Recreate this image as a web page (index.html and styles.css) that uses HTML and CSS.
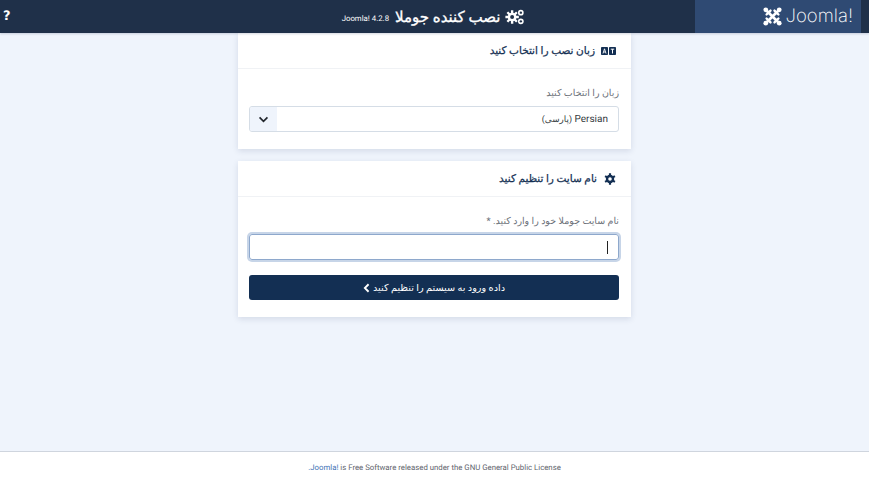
FILE: index.html
```html
<!DOCTYPE html>
<html lang="fa" dir="rtl">
<head>
<meta charset="utf-8">
<title>نصب کننده جوملا</title>
<link rel="stylesheet" href="styles.css">
</head>
<body>
<header class="topbar">
  <div class="logo-wrap">
    <div class="logo-panel">
      <span class="logo" dir="ltr">
        <svg class="logo-mark" viewBox="0 0 24 24" width="19" height="19" aria-hidden="true">
          <g fill="none" stroke="#fff" stroke-linecap="round">
            <path stroke-width="3.400" d="M5 5l14 14M19 5L5 19"/>
            <path stroke-width="3" d="M4.500 9.500l5-5M14.500 19.500l5-5M4.500 14.500l5 5M14.500 4.500l5 5"/>
          </g>
          <circle cx="3.500" cy="3.500" r="3" fill="#fff"/>
          <circle cx="20.500" cy="3.500" r="3" fill="#fff"/>
          <circle cx="3.500" cy="20.500" r="3" fill="#fff"/>
          <circle cx="20.500" cy="20.500" r="3" fill="#fff"/>
        </svg>
        <span class="logo-text">Joomla!</span>
      </span>
    </div>
  </div>
  <div class="title">
    <svg class="title-icon" viewBox="0 0 24 20" width="19" height="16" aria-hidden="true">
      <g fill="#fff">
        <circle cx="9" cy="10" r="5.500"/>
        <g stroke="#fff" stroke-width="3"><path d="M9 1.500v17M.5 10h17M3 4l12 12M15 4L3 16"/></g>
        <circle cx="20" cy="4.500" r="3.600"/>
        <circle cx="20" cy="15.500" r="3.600"/>
      </g>
      <circle cx="9" cy="10" r="2.500" fill="#1f3049"/>
      <circle cx="20" cy="4.500" r="1.500" fill="#1f3049"/>
      <circle cx="20" cy="15.500" r="1.500" fill="#1f3049"/>
    </svg>
    <span class="title-text">نصب کننده جوملا</span>
    <span class="version" dir="ltr">Joomla! 4.2.8</span>
  </div>
  <div class="help">?</div>
</header>

<main class="main">
  <section class="card">
    <h2 class="card-head head-lang">
      <svg class="head-icon" viewBox="0 0 15 8" width="15" height="8" aria-hidden="true">
        <rect width="7" height="8" rx=".8" fill="#132f53"/>
        <rect x="8" width="7" height="8" rx=".8" fill="#132f53"/>
        <path d="M2 6.500L3.500 1.800 5 6.500M2.600 5h1.800" fill="none" stroke="#fff" stroke-width=".9"/>
        <path d="M9.800 2.200h3.400M11.500 2.200v4.300" fill="none" stroke="#fff" stroke-width="1"/>
      </svg>
      <span>زبان نصب را انتخاب کنید</span>
    </h2>
    <div class="card-body">
      <label class="field-label">زبان را انتخاب کنید</label>
      <div class="select">
        <span class="select-value">Persian <span class="native">(پارسی)</span></span>
        <span class="select-arrow">
          <svg viewBox="0 0 12 8" width="11" height="7" aria-hidden="true"><path d="M1.500 1.500L6 6l4.500-4.500" fill="none" stroke="#22262c" stroke-width="1.900"/></svg>
        </span>
      </div>
    </div>
  </section>

  <section class="card">
    <h2 class="card-head head-site">
      <svg class="head-icon" viewBox="0 0 20 20" width="12" height="12" aria-hidden="true">
        <g fill="#132f53">
          <circle cx="10" cy="10" r="7"/>
          <g stroke="#132f53" stroke-width="3.600"><path d="M10 .5v19M1.800 5.200l16.400 9.600M18.200 5.200L1.800 14.800"/></g>
        </g>
        <circle cx="10" cy="10" r="3" fill="#fff"/>
      </svg>
      <span>نام سایت را تنظیم کنید</span>
    </h2>
    <div class="card-body">
      <label class="field-label">نام سایت جوملا خود را وارد کنید. *</label>
      <div class="input"><span class="caret"></span></div>
      <button class="submit" type="button">
        <span>داده ورود به سیستم را تنظیم کنید</span>
        <svg viewBox="0 0 8 12" width="7" height="10" aria-hidden="true"><path d="M6.500 1.500L2 6l4.500 4.500" fill="none" stroke="#fff" stroke-width="2.200"/></svg>
      </button>
    </div>
  </section>
</main>

<footer class="footer">
  <span dir="ltr"><a class="footer-link">.Joomla!</a> is Free Software released under the GNU General Public License</span>
</footer>
</body>
</html>
```

FILE: styles.css
```css
* { box-sizing: border-box; }
html, body { height: 100%; }
body {
  margin: 0;
  display: flex;
  flex-direction: column;
  height: 483px;
  overflow: hidden;
  background: #eff4fc;
  font-family: Roboto, "DejaVu Sans", sans-serif;
  color: #22262a;
  text-rendering: geometricPrecision;
}
.topbar {
  flex: 0 0 33px;
  display: grid;
  grid-template-columns: 174px 1fr 174px;
  align-items: stretch;
  background: #1f3049;
  color: #fff;
  box-shadow: 0 1px 2px rgba(30, 50, 90, .2);
  position: relative;
  z-index: 1;
}
.logo-wrap { padding-right: 8px; display: flex; }
.logo-panel {
  flex: 1;
  background: #2f4a73;
  display: flex;
  justify-content: flex-start;
  align-items: center;
  padding-right: 8px;
}
.logo { display: flex; align-items: center; gap: 4px; }
.logo-text { font-family: Inter, sans-serif; font-weight: 200; font-size: 18.500px; line-height: 1; }
.title { display: flex; justify-content: center; align-items: center; gap: 5px; padding-right: 3px; }
.title-text { font-size: 15px; font-weight: 400; -webkit-text-stroke: .35px #fff; }
.version { font-size: 7.800px; margin-right: 1px; margin-top: 3px; }
.help { display: flex; align-items: center; justify-content: flex-end; padding-left: 3px; font-size: 13px; font-weight: 700; font-family: "DejaVu Sans", sans-serif; }

.main {
  flex: 1;
  display: flex;
  flex-direction: column;
  align-items: center;
  gap: 12px;
}
.card {
  width: 393px;
  background: #fff;
  box-shadow: 0 2px 6px rgba(30, 50, 90, .13);
}
.card-head {
  margin: 0;
  height: 36px;
  padding: 0 15px;
  display: flex;
  align-items: center;
  font-size: 10.500px;
  font-weight: 400;
  -webkit-text-stroke: .25px #132f53;
  color: #132f53;
  border-bottom: 1px solid #f0f2f5;
}
.head-lang { gap: 6px; }
.head-site { gap: 7px; }
.card-body { padding: 17px 12px 17px 11px; }
.field-label { display: block; font-size: 9.500px; color: #6b7078; height: 20px; line-height: 16px; }
.select {
  height: 26px;
  display: flex;
  justify-content: space-between;
  align-items: center;
  border: 1px solid #d5dde6;
  border-radius: 3px;
  overflow: hidden;
  font-size: 10px;
  color: #343a40;
}
.native { font-size: 8.800px; }
.select-value { padding-right: 10px; }
.select-arrow {
  width: 27px;
  height: 100%;
  background: #eff4fc;
  display: flex;
  align-items: center;
  justify-content: center;
}
.input {
  height: 26px;
  border: 1px solid #8ea8cc;
  border-radius: 3px;
  box-shadow: 0 0 0 2px #c7d5e8;
  display: flex;
  align-items: center;
  padding-right: 10px;
}
.caret { width: 1px; height: 13px; background: #222; }
.submit {
  width: 100%;
  height: 25px;
  margin-top: 15px;
  border: 0;
  border-radius: 3px;
  background: #132f53;
  color: #fff;
  font: inherit;
  font-size: 9.700px;
  display: flex;
  justify-content: center;
  align-items: center;
  gap: 3px;
}
.footer {
  flex: 0 0 32px;
  background: #fff;
  border-top: 1px solid #cfd5de;
  display: flex;
  justify-content: center;
  align-items: center;
  font-size: 7.800px;
  color: #5f656d;
}
.footer-link { color: #3f73b5; }
```
